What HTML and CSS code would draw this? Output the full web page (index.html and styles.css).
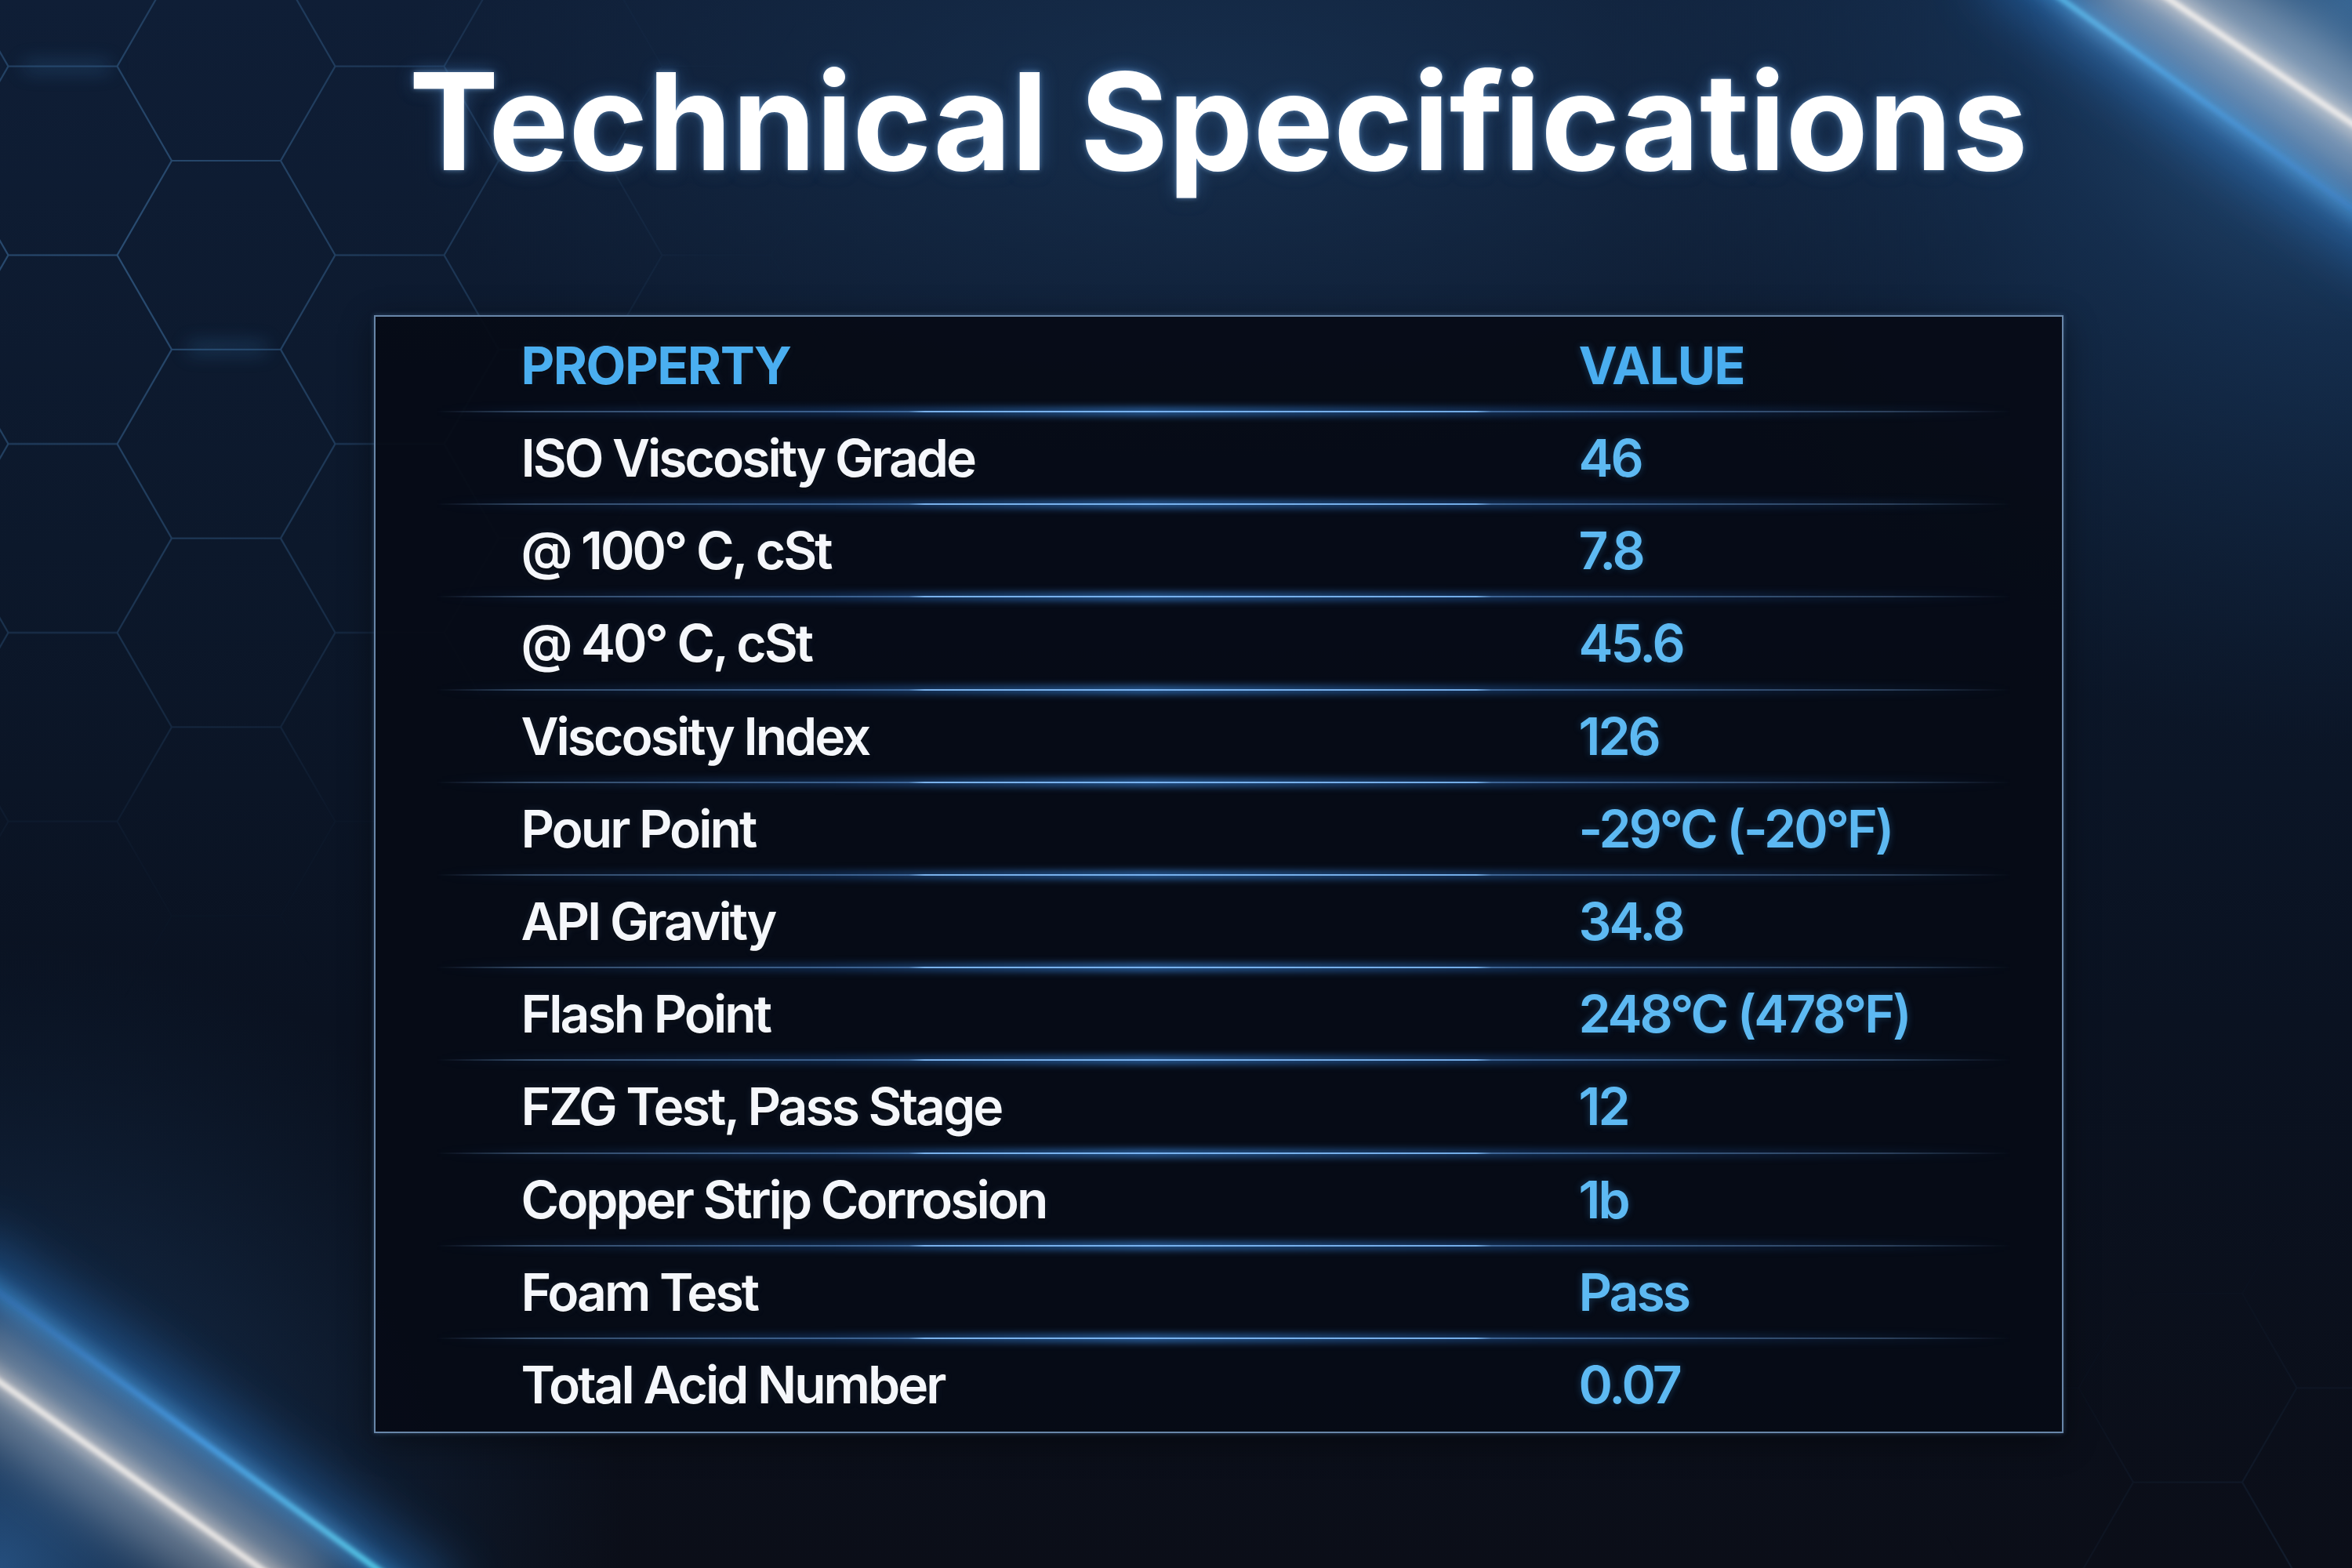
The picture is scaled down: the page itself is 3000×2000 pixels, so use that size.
FILE: index.html
```html
<!DOCTYPE html>
<html lang="en">
<head>
<meta charset="utf-8">
<title>Technical Specifications</title>
<link rel="stylesheet" href="styles.css">
</head>
<body>
<svg class="backdrop" width="3000" height="2000" viewBox="0 0 3000 2000" xmlns="http://www.w3.org/2000/svg" aria-hidden="true">
  <defs>
    <filter id="blurWide" x="-50%" y="-50%" width="200%" height="200%"><feGaussianBlur stdDeviation="34"/></filter>
    <filter id="blurMid" x="-50%" y="-50%" width="200%" height="200%"><feGaussianBlur stdDeviation="12"/></filter>
    <filter id="blurSoft" x="-50%" y="-50%" width="200%" height="200%"><feGaussianBlur stdDeviation="3"/></filter>
    <pattern id="hex" patternUnits="userSpaceOnUse" x="80" y="205" width="417" height="240.8">
      <path fill="none" stroke="#2d5279" stroke-width="2.2"
        d="M-139,0 L-69.5,-120.4 L69.5,-120.4 L139,0 L69.5,120.4 L-69.5,120.4 Z
           M278,0 L347.5,-120.4 L486.5,-120.4 L556,0 L486.5,120.4 L347.5,120.4 Z
           M-139,240.8 L-69.5,120.4 L69.5,120.4 L139,240.8 L69.5,361.2 L-69.5,361.2 Z
           M278,240.8 L347.5,120.4 L486.5,120.4 L556,240.8 L486.5,361.2 L347.5,361.2 Z
           M69.5,120.4 L139,0 L278,0 L347.5,120.4 L278,240.8 L139,240.8 Z"/>
    </pattern>
    <radialGradient id="hexFadeTL" gradientUnits="userSpaceOnUse" cx="120" cy="330" r="950">
      <stop offset="0" stop-color="#fff" stop-opacity="0.95"/>
      <stop offset="0.45" stop-color="#fff" stop-opacity="0.55"/>
      <stop offset="0.8" stop-color="#fff" stop-opacity="0.06"/>
      <stop offset="1" stop-color="#fff" stop-opacity="0"/>
    </radialGradient>
    <radialGradient id="hexFadeBR" gradientUnits="userSpaceOnUse" cx="2950" cy="2050" r="480">
      <stop offset="0" stop-color="#fff" stop-opacity="0.25"/>
      <stop offset="1" stop-color="#fff" stop-opacity="0"/>
    </radialGradient>
    <mask id="hexMask" maskUnits="userSpaceOnUse" x="0" y="0" width="3000" height="2000">
      <rect width="3000" height="2000" fill="url(#hexFadeTL)"/>
      <rect width="3000" height="2000" fill="url(#hexFadeBR)"/>
    </mask>
    <linearGradient id="trBlue" gradientUnits="userSpaceOnUse" x1="2600" y1="-20" x2="3000" y2="266">
      <stop offset="0" stop-color="#5fd6ff"/>
      <stop offset="0.35" stop-color="#3aa6f0"/>
      <stop offset="1" stop-color="#2a78d0" stop-opacity="0.55"/>
    </linearGradient>
    <linearGradient id="blBlue" gradientUnits="userSpaceOnUse" x1="0" y1="1650" x2="480" y2="2000">
      <stop offset="0" stop-color="#2a6cc0" stop-opacity="0.45"/>
      <stop offset="0.55" stop-color="#3d9fee"/>
      <stop offset="1" stop-color="#5ee6ff"/>
    </linearGradient>
    <radialGradient id="cornerTR" gradientUnits="userSpaceOnUse" cx="3000" cy="0" r="950">
      <stop offset="0" stop-color="#3a6c9c" stop-opacity="0.9"/>
      <stop offset="0.45" stop-color="#1d4470" stop-opacity="0.45"/>
      <stop offset="1" stop-color="#163457" stop-opacity="0"/>
    </radialGradient>
    <radialGradient id="cornerBL" gradientUnits="userSpaceOnUse" cx="0" cy="2000" r="800">
      <stop offset="0" stop-color="#2b5e96" stop-opacity="0.8"/>
      <stop offset="0.5" stop-color="#1b406b" stop-opacity="0.35"/>
      <stop offset="1" stop-color="#123050" stop-opacity="0"/>
    </radialGradient>
  </defs>

  <!-- corner glows -->
  <rect width="3000" height="2000" fill="url(#cornerTR)"/>
  <rect width="3000" height="2000" fill="url(#cornerBL)"/>

  <!-- hexagon grid -->
  <g mask="url(#hexMask)">
    <rect width="3000" height="2000" fill="url(#hex)"/>
    <g filter="url(#blurMid)" stroke="#3f86c2" stroke-width="10" opacity="0.55">
      <line x1="30" y1="85" x2="140" y2="85"/>
      <line x1="240" y1="444" x2="340" y2="444"/>
    </g>
  </g>

  <!-- top right streaks -->
  <g>
    <line x1="2548" y1="-60" x2="3080" y2="323" stroke="#2f86e0" stroke-width="100" opacity="0.4" filter="url(#blurWide)"/>
    <line x1="2548" y1="-60" x2="3080" y2="323" stroke="#46b4ff" stroke-width="16" opacity="0.55" filter="url(#blurMid)"/>
    <line x1="2548" y1="-60" x2="3080" y2="323" stroke="url(#trBlue)" stroke-width="5" filter="url(#blurSoft)"/>
    <line x1="2680" y1="-60" x2="3080" y2="212" stroke="#dfe7f2" stroke-width="130" opacity="0.5" filter="url(#blurWide)"/>
    <line x1="2680" y1="-60" x2="3080" y2="212" stroke="#fff1e8" stroke-width="18" opacity="0.7" filter="url(#blurMid)"/>
    <line x1="2680" y1="-60" x2="3080" y2="212" stroke="#fffaf5" stroke-width="6" filter="url(#blurSoft)"/>
  </g>

  <!-- bottom left streaks -->
  <g>
    <line x1="-60" y1="1606" x2="560" y2="2059" stroke="#2f86e0" stroke-width="100" opacity="0.4" filter="url(#blurWide)"/>
    <line x1="-60" y1="1606" x2="560" y2="2059" stroke="#46b4ff" stroke-width="16" opacity="0.55" filter="url(#blurMid)"/>
    <line x1="-60" y1="1606" x2="560" y2="2059" stroke="url(#blBlue)" stroke-width="6" filter="url(#blurSoft)"/>
    <line x1="-60" y1="1720" x2="400" y2="2049" stroke="#d8e2ee" stroke-width="120" opacity="0.45" filter="url(#blurWide)"/>
    <line x1="-60" y1="1720" x2="400" y2="2049" stroke="#fff0e6" stroke-width="18" opacity="0.7" filter="url(#blurMid)"/>
    <line x1="-60" y1="1720" x2="400" y2="2049" stroke="#fffaf5" stroke-width="6" filter="url(#blurSoft)"/>
  </g>
</svg>

<main class="page">
  <h1 class="title">Technical Specifications</h1>
  <section class="spec-table">
    <div class="row head"><span class="prop">PROPERTY</span><span class="val">VALUE</span></div>
    <div class="sep"></div>
    <div class="row"><span class="prop">ISO Viscosity Grade</span><span class="val">46</span></div>
    <div class="sep"></div>
    <div class="row"><span class="prop">@ 100° C, cSt</span><span class="val">7.8</span></div>
    <div class="sep"></div>
    <div class="row"><span class="prop">@ 40° C, cSt</span><span class="val">45.6</span></div>
    <div class="sep"></div>
    <div class="row"><span class="prop">Viscosity Index</span><span class="val">126</span></div>
    <div class="sep"></div>
    <div class="row"><span class="prop">Pour Point</span><span class="val">-29°C (-20°F)</span></div>
    <div class="sep"></div>
    <div class="row"><span class="prop">API Gravity</span><span class="val">34.8</span></div>
    <div class="sep"></div>
    <div class="row"><span class="prop">Flash Point</span><span class="val">248°C (478°F)</span></div>
    <div class="sep"></div>
    <div class="row"><span class="prop">FZG Test, Pass Stage</span><span class="val">12</span></div>
    <div class="sep"></div>
    <div class="row"><span class="prop">Copper Strip Corrosion</span><span class="val">1b</span></div>
    <div class="sep"></div>
    <div class="row"><span class="prop">Foam Test</span><span class="val">Pass</span></div>
    <div class="sep"></div>
    <div class="row"><span class="prop">Total Acid Number</span><span class="val">0.07</span></div>
  </section>
</main>
</body>
</html>
```

FILE: styles.css
```css
html, body {
  margin: 0;
  padding: 0;
}

body {
  width: 3000px;
  height: 2000px;
  overflow: hidden;
  position: relative;
  font-family: "Inter", "Noto Sans", "Liberation Sans", sans-serif;
  background:
    radial-gradient(ellipse 1500px 650px at 1550px 130px, rgba(24, 50, 82, 0.8) 0%, rgba(24, 50, 82, 0) 70%),
    linear-gradient(180deg, #0f1e36 0%, #0c182b 35%, #0a1221 65%, #0b0e18 100%);
}

.backdrop {
  position: absolute;
  left: 0;
  top: 0;
  z-index: 0;
  pointer-events: none;
}

.page {
  position: relative;
  z-index: 1;
  width: 3000px;
  box-sizing: border-box;
  padding-left: 108px;
  display: flex;
  flex-direction: column;
  align-items: center;
}

.title {
  margin: 68px 0 0;
  font-size: 172px;
  line-height: 172px;
  font-weight: 700;
  letter-spacing: 0;
  color: #ffffff;
  text-shadow:
    0 0 6px rgba(150, 200, 255, 0.55),
    0 0 22px rgba(90, 160, 240, 0.45),
    0 6px 14px rgba(0, 0, 0, 0.55);
}

.spec-table {
  margin-top: 162px;
  width: 2155px;
  box-sizing: border-box;
  border: 2px solid #6886a8;
  background: rgba(6, 11, 22, 0.93);
  padding-bottom: 2px;
  box-shadow: 0 0 6px rgba(110, 160, 220, 0.35), 0 10px 40px rgba(0, 0, 0, 0.45);
}

.row {
  display: grid;
  grid-template-columns: 1349px 1fr;
  padding-left: 186px;
  height: 116.2px;
  line-height: 116.2px;
  font-size: 66px;
  font-weight: 600;
  white-space: nowrap;
}

.row .prop {
  color: #f5f7fb;
  letter-spacing: -3px;
  text-shadow: 0 2px 5px rgba(0, 0, 0, 0.7), 0 0 10px rgba(160, 200, 255, 0.15);
}

.row .val {
  color: #5db9f2;
  letter-spacing: -3px;
  text-shadow: 0 0 10px rgba(70, 160, 240, 0.35), 0 2px 4px rgba(0, 0, 0, 0.6);
}

.row.head {
  height: 120px;
  line-height: 124px;
  font-weight: 700;
}

.row.head .prop,
.row.head .val {
  color: #4aaef0;
  letter-spacing: -1.5px;
}

.sep {
  position: relative;
  height: 2px;
  margin: 0 64px 0 77px;
  background: linear-gradient(90deg,
    rgba(70, 95, 125, 0) 0%,
    rgba(70, 95, 125, 0.75) 6%,
    rgba(80, 110, 145, 0.85) 30%,
    #9ccaf3 31%,
    #b4d8f7 45%,
    #8fc1ee 66%,
    rgba(80, 110, 145, 0.85) 67%,
    rgba(70, 95, 125, 0.6) 92%,
    rgba(70, 95, 125, 0) 100%);
}

.sep::after {
  content: "";
  position: absolute;
  left: 0;
  right: 0;
  top: -4px;
  bottom: -4px;
  background: linear-gradient(90deg,
    rgba(40, 110, 200, 0) 0%,
    rgba(40, 110, 200, 0.35) 25%,
    rgba(60, 140, 230, 0.7) 45%,
    rgba(40, 110, 200, 0.35) 70%,
    rgba(40, 110, 200, 0) 100%);
  filter: blur(5px);
}
```
